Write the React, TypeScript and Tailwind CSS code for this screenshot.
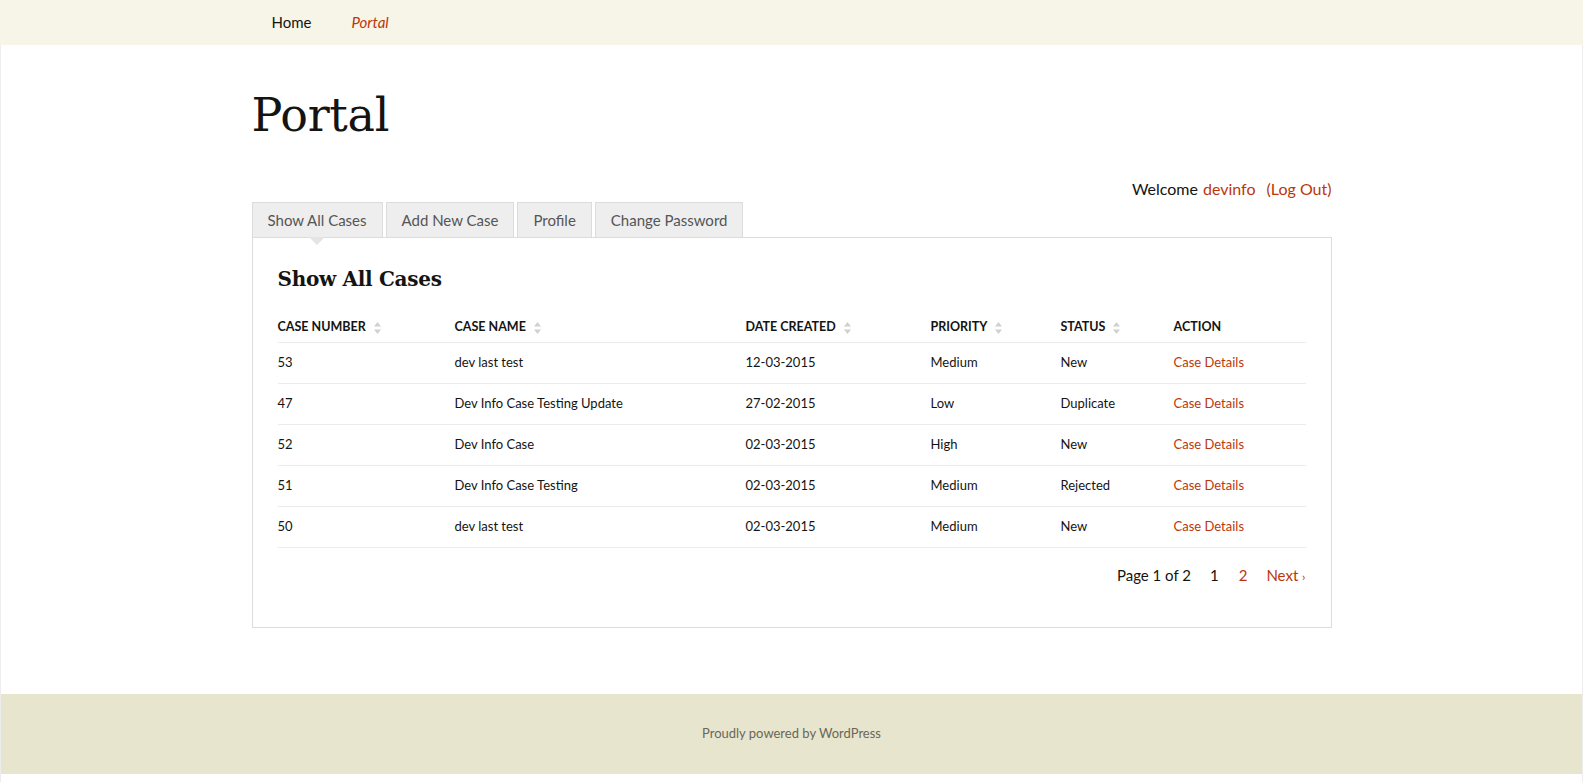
const cases = [
  { num: '53', name: 'dev last test', date: '12-03-2015', priority: 'Medium', status: 'New' },
  { num: '47', name: 'Dev Info Case Testing Update', date: '27-02-2015', priority: 'Low', status: 'Duplicate' },
  { num: '52', name: 'Dev Info Case', date: '02-03-2015', priority: 'High', status: 'New' },
  { num: '51', name: 'Dev Info Case Testing', date: '02-03-2015', priority: 'Medium', status: 'Rejected' },
  { num: '50', name: 'dev last test', date: '02-03-2015', priority: 'Medium', status: 'New' },
];

const columns = [
  { label: 'Case Number', sortable: true, width: 'w-[177px]' },
  { label: 'Case Name', sortable: true, width: 'w-[291px]' },
  { label: 'Date Created', sortable: true, width: 'w-[185px]' },
  { label: 'Priority', sortable: true, width: 'w-[130px]' },
  { label: 'Status', sortable: true, width: 'w-[113px]' },
  { label: 'Action', sortable: false, width: '' },
];

const tabs = ['Show All Cases', 'Add New Case', 'Profile', 'Change Password'];

function SortIcon() {
  return (
    <svg width="9" height="14" viewBox="0 0 9 14" className="ml-[7px] inline-block">
      <path d="M4.5 1 L8 5.5 H1 Z" fill="#d0d0d0" />
      <path d="M4.5 13 L8 8.5 H1 Z" fill="#d0d0d0" />
    </svg>
  );
}

export default function App() {
  return (
    <div
      className="min-h-screen border-x border-[#ededed] bg-white text-[#141412] flex flex-col"
      style={{ fontFamily: 'Lato, "Open Sans", sans-serif' }}
    >
      {/* top nav */}
      <header className="bg-[#f7f5e7] h-[45px] -mx-px">
        <nav className="w-[1080px] mx-auto flex h-full items-center text-[15px]">
          <a className="px-5 text-[#141412]">Home</a>
          <a className="px-5 italic text-[#bc360a]">Portal</a>
        </nav>
      </header>

      <main className="w-[1080px] mx-auto flex-1">
        <h1
          className="text-[46px] leading-none font-normal mt-[47px] tracking-[-0.3px]"
          style={{ fontFamily: '"DejaVu Serif", serif' }}
        >
          Portal
        </h1>

        <div className="flex justify-end mt-[41px] text-[16px] leading-5">
          <span>Welcome</span>
          <a className="ml-[5px] text-[#bc360a]">devinfo</a>
          <a className="ml-[11px] text-[#bc360a]">(Log Out)</a>
        </div>

        {/* tabs */}
        <div className="flex gap-[3px] mt-[3px]">
          {tabs.map((t, i) => (
            <div
              key={t}
              className="relative h-[35px] px-[15px] flex items-center bg-[#eeeeee] border border-b-0 border-[#dcdcdc] text-[15px] text-[#555555]"
            >
              {t}
              {i === 0 && (
                <span className="absolute left-1/2 -translate-x-1/2 top-full w-0 h-0 border-x-[8px] border-x-transparent border-t-[8px] border-t-[#e4e4e4] z-10" />
              )}
            </div>
          ))}
        </div>

        {/* panel */}
        <section className="border border-[#dcdcdc] px-[25px] pt-[29px] pb-[41px]">
          <h2
            className="text-[20px] font-bold leading-tight tracking-[-0.3px]"
            style={{ fontFamily: '"DejaVu Serif", serif' }}
          >
            Show All Cases
          </h2>

          <table className="w-full mt-[19px] border-collapse text-[13px]">
            <thead>
              <tr className="border-b border-[#ececec]">
                {columns.map((c) => (
                  <th key={c.label} className={`${c.width} text-left font-bold uppercase text-[12.5px] h-[31px] p-0 pt-[3px] align-middle`}>
                    <span className="inline-flex items-center">
                      {c.label}
                      {c.sortable && <SortIcon />}
                    </span>
                  </th>
                ))}
              </tr>
            </thead>
            <tbody>
              {cases.map((r, i) => (
                <tr key={i} className="border-b border-[#ececec] h-[41px]">
                  <td className="p-0">{r.num}</td>
                  <td className="p-0">{r.name}</td>
                  <td className="p-0">{r.date}</td>
                  <td className="p-0">{r.priority}</td>
                  <td className="p-0">{r.status}</td>
                  <td className="p-0">
                    <a className="text-[#bc360a]">Case Details</a>
                  </td>
                </tr>
              ))}
            </tbody>
          </table>

          <div className="flex justify-end items-center mt-[16px] text-[15px]">
            <span>Page 1 of 2</span>
            <span className="ml-[19px]">1</span>
            <a className="ml-[20px] text-[#bc360a]">2</a>
            <a className="ml-[19px] text-[#bc360a]">
              Next <span className="text-[12px]">›</span>
            </a>
          </div>
        </section>
      </main>

      <footer className="bg-[#e8e5ce] h-[80px] mt-[65px] mb-[8px] flex items-center justify-center text-[13px] text-[#686758]">
        Proudly powered by WordPress
      </footer>
    </div>
  );
}
